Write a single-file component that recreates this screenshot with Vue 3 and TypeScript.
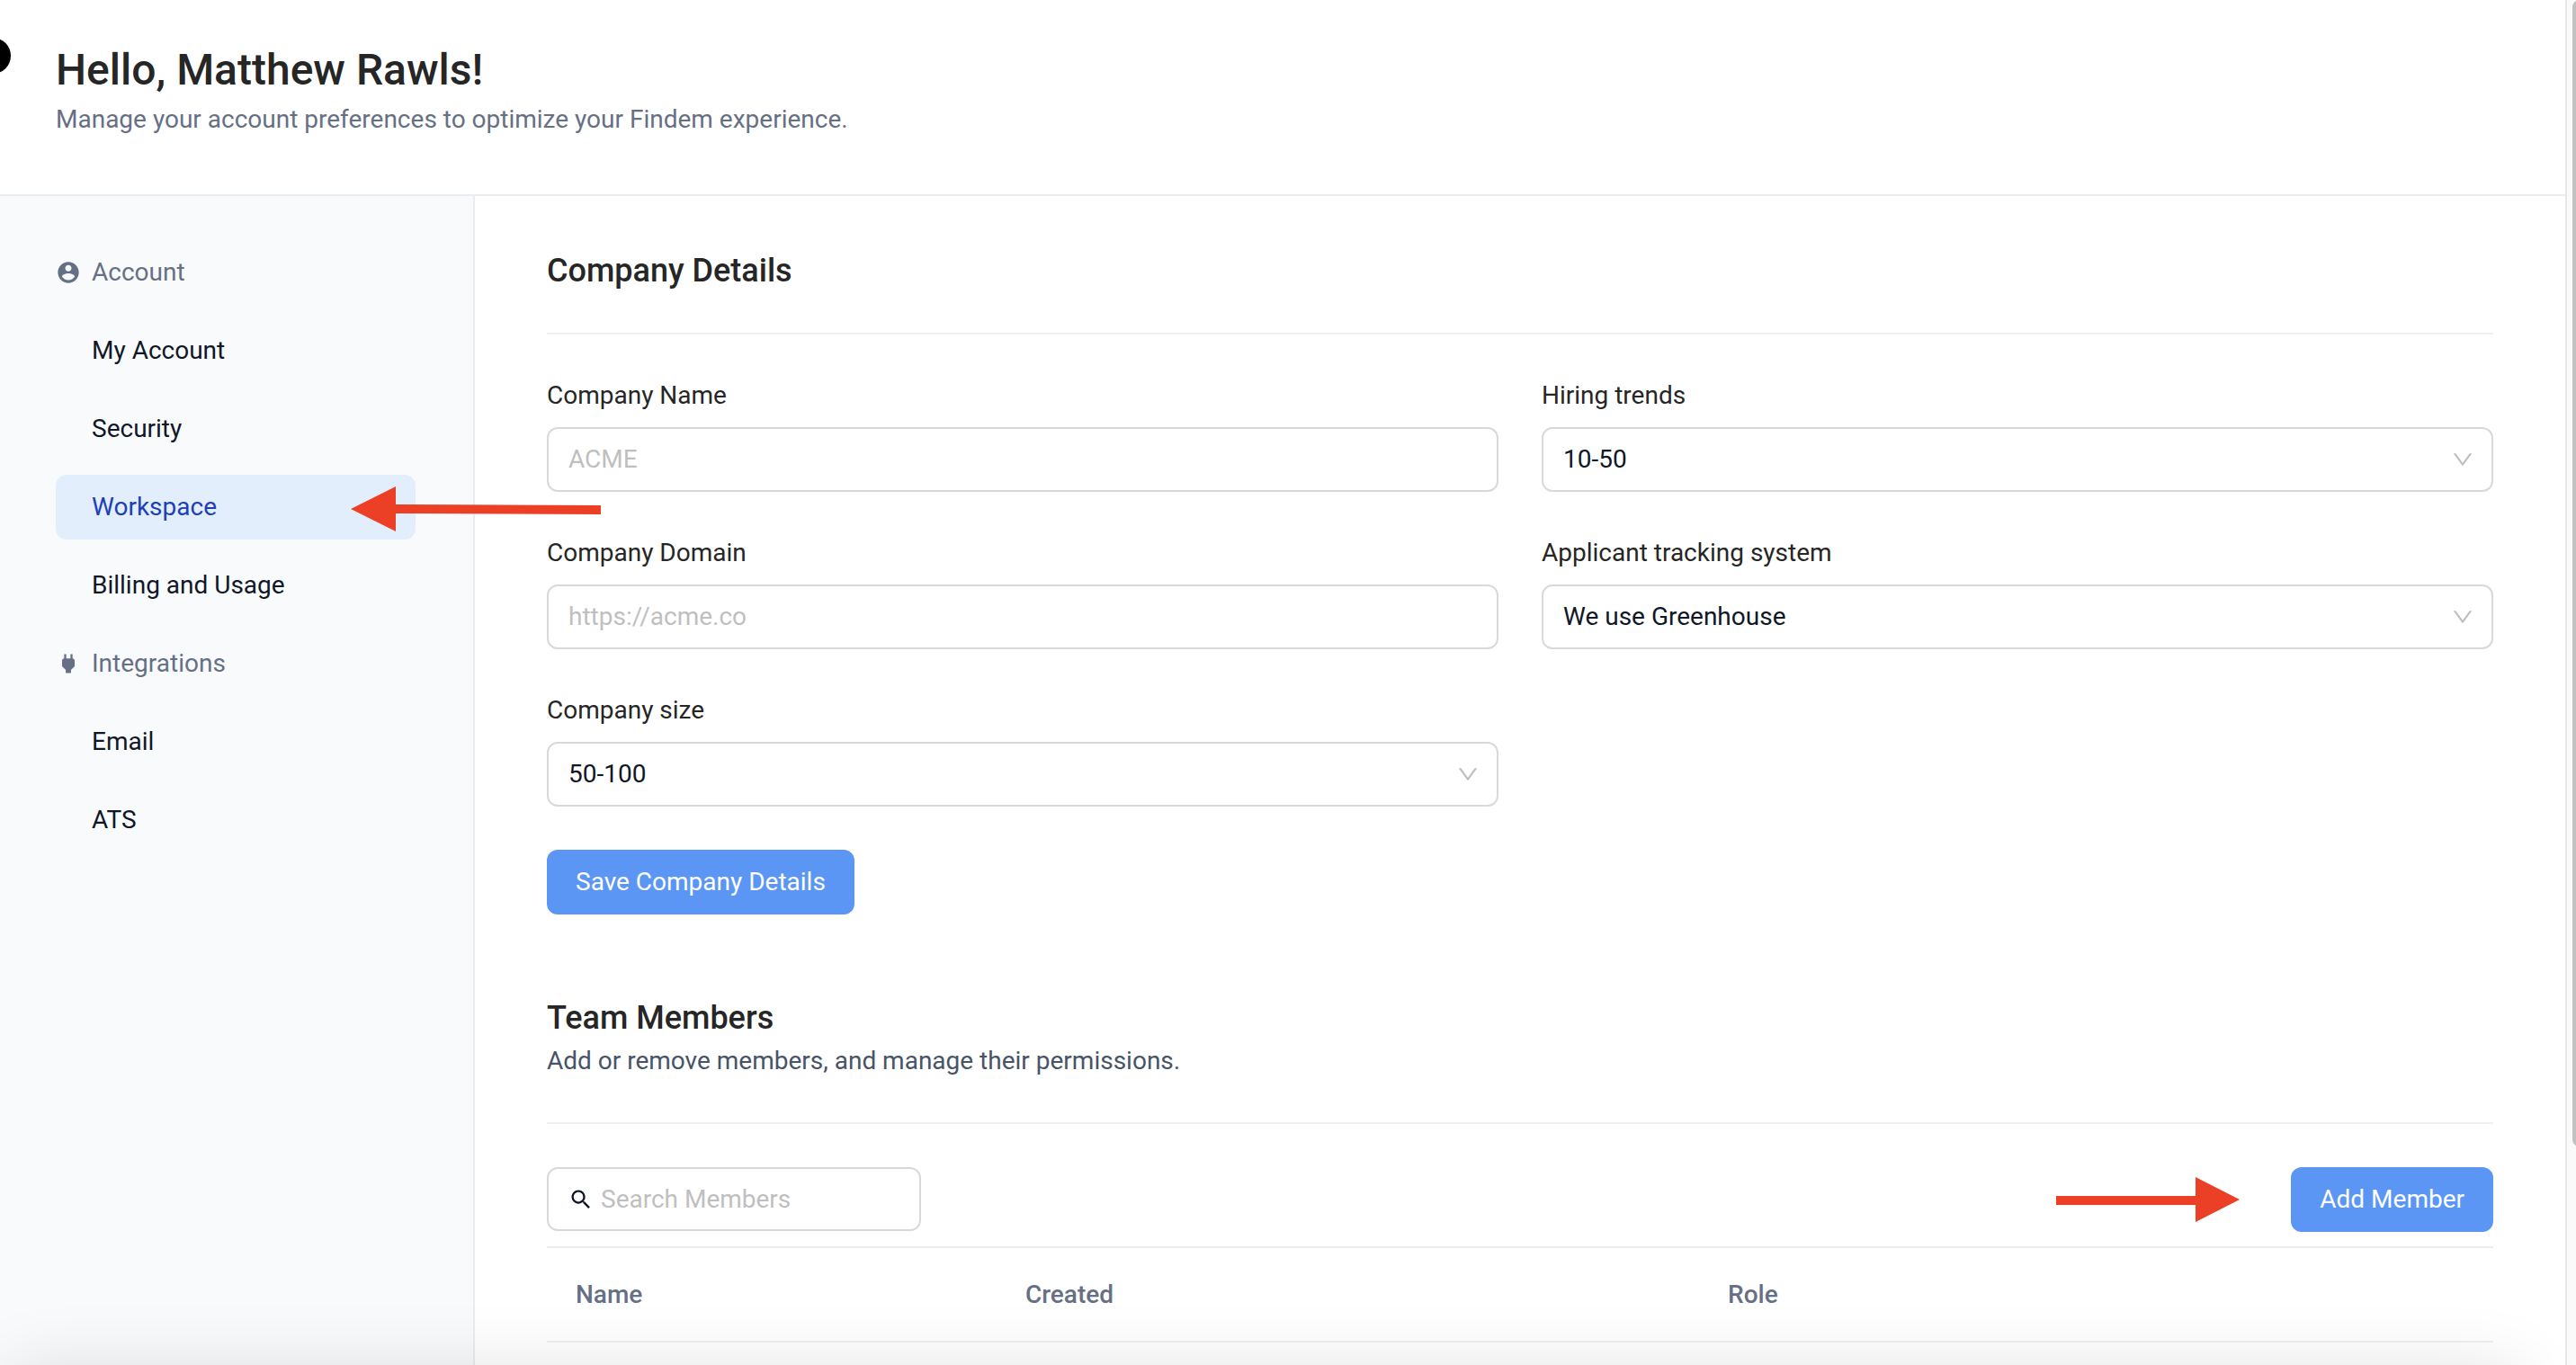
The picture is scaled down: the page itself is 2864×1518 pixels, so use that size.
<script setup lang="ts">
import { ref } from 'vue'

interface NavItem {
  label: string
  active?: boolean
}

interface NavGroup {
  title: string
  icon: string
  items: NavItem[]
}

const groups: NavGroup[] = [
  {
    title: 'Account',
    icon: 'M12 2C6.48 2 2 6.48 2 12s4.48 10 10 10 10-4.48 10-10S17.52 2 12 2zm0 3c1.66 0 3 1.34 3 3s-1.34 3-3 3-3-1.34-3-3 1.34-3 3-3zm0 14.2c-2.5 0-4.71-1.28-6-3.22.03-1.99 4-3.08 6-3.08 1.99 0 5.97 1.09 6 3.08-1.29 1.94-3.5 3.22-6 3.22z',
    items: [
      { label: 'My Account' },
      { label: 'Security' },
      { label: 'Workspace', active: true },
      { label: 'Billing and Usage' },
    ],
  },
  {
    title: 'Integrations',
    icon: 'M16.01 7L16 3h-2v4h-4V3H8v4h-.01C7 6.99 6 7.99 6 8.99v5.49L9.5 18v3h5v-3l3.5-3.51v-5.5c0-1-1-2-1.99-1.99z',
    items: [{ label: 'Email' }, { label: 'ATS' }],
  },
]

const chevron =
  'M884 256h-75c-5.1 0-9.9 2.5-12.9 6.6L512 654.2 227.9 262.6c-3-4.1-7.8-6.6-12.9-6.6h-75c-6.5 0-10.3 7.4-6.5 12.7l352.6 486.1c12.8 17.6 39 17.6 51.7 0l352.6-486.1c3.9-5.3.1-12.7-6.4-12.7z'

const companyName = ref('')
const companyDomain = ref('')
const companySize = ref('50-100')
const hiringTrend = ref('10-50')
const ats = ref('We use Greenhouse')
const search = ref('')

const sizes = ['1-10', '10-50', '50-100', '100-500']
const trends = ['1-10', '10-50', '50-100']
const systems = ['We use Greenhouse', 'We use Lever', 'We use Workday']
</script>

<template>
  <div class="shell">
    <div class="page">
      <header class="header">
        <span class="bubble" aria-hidden="true"></span>
        <h1>Hello, Matthew Rawls!</h1>
        <p>Manage your account preferences to optimize your Findem experience.</p>
      </header>

      <div class="body">
        <nav class="sidebar" aria-label="Settings">
          <template v-for="group in groups" :key="group.title">
            <div class="group">
              <svg class="icon" viewBox="0 0 24 24" aria-hidden="true">
                <path :d="group.icon" fill="currentColor" />
              </svg>
              <span>{{ group.title }}</span>
            </div>
            <a
              v-for="item in group.items"
              :key="item.label"
              href="#"
              class="link"
              :class="{ active: item.active }"
            >
              {{ item.label }}
              <svg v-if="item.active" class="arrow pointer" viewBox="0 0 278 50" aria-hidden="true">
                <path d="M0 25 50 0V20L278 21V31L50 30V50Z" fill="currentColor" />
              </svg>
            </a>
          </template>
        </nav>

        <main class="main">
          <section>
            <h2>Company Details</h2>
            <hr class="divider" />
            <form class="form" @submit.prevent>
              <div class="fields">
                <div class="field">
                  <label for="name">Company Name</label>
                  <input id="name" v-model="companyName" class="control text" type="text" placeholder="ACME" />
                </div>
                <div class="field">
                  <label for="trend">Hiring trends</label>
                  <div class="select">
                    <select id="trend" v-model="hiringTrend" class="control">
                      <option v-for="t in trends" :key="t">{{ t }}</option>
                    </select>
                    <svg viewBox="64 64 896 896" aria-hidden="true"><path :d="chevron" fill="currentColor" /></svg>
                  </div>
                </div>
                <div class="field">
                  <label for="domain">Company Domain</label>
                  <input id="domain" v-model="companyDomain" class="control text" type="text" placeholder="https://acme.co" />
                </div>
                <div class="field">
                  <label for="ats">Applicant tracking system</label>
                  <div class="select">
                    <select id="ats" v-model="ats" class="control">
                      <option v-for="s in systems" :key="s">{{ s }}</option>
                    </select>
                    <svg viewBox="64 64 896 896" aria-hidden="true"><path :d="chevron" fill="currentColor" /></svg>
                  </div>
                </div>
                <div class="field">
                  <label for="size">Company size</label>
                  <div class="select">
                    <select id="size" v-model="companySize" class="control">
                      <option v-for="s in sizes" :key="s">{{ s }}</option>
                    </select>
                    <svg viewBox="64 64 896 896" aria-hidden="true"><path :d="chevron" fill="currentColor" /></svg>
                  </div>
                </div>
              </div>
              <button class="button" type="submit">Save Company Details</button>
            </form>
          </section>

          <section class="team">
            <h2>Team Members</h2>
            <p class="hint">Add or remove members, and manage their permissions.</p>
            <hr class="divider" />
            <div class="toolbar">
              <label class="search">
                <svg class="icon" viewBox="0 0 24 24" aria-hidden="true">
                  <path
                    fill="currentColor"
                    d="M15.5 14h-.79l-.28-.27C15.41 12.59 16 11.11 16 9.5 16 5.91 13.09 3 9.5 3S3 5.91 3 9.5 5.91 16 9.5 16c1.61 0 3.09-.59 4.23-1.57l.27.28v.79l5 4.99L20.49 19l-4.99-5zm-6 0C7.01 14 5 11.99 5 9.5S7.01 5 9.5 5 14 7.01 14 9.5 11.99 14 9.5 14z"
                  />
                </svg>
                <input v-model="search" type="search" placeholder="Search Members" aria-label="Search Members" />
              </label>
              <div class="actions">
                <svg class="arrow" width="204" height="50" viewBox="0 0 204 50" aria-hidden="true">
                  <path d="M204 25 155 0V21H0V31H155V50Z" fill="currentColor" />
                </svg>
                <button class="button" type="button">Add Member</button>
              </div>
            </div>
            <table class="members">
              <thead>
                <tr>
                  <th scope="col" class="col-name">Name</th>
                  <th scope="col" class="col-created">Created</th>
                  <th scope="col">Role</th>
                </tr>
              </thead>
            </table>
          </section>
        </main>
      </div>
    </div>

    <div class="track" aria-hidden="true"><div class="thumb"></div></div>
    <div class="shade" aria-hidden="true"></div>
  </div>
</template>

<style>
body {
  margin: 0;
  background: #fff;
}
</style>

<style scoped>
.shell {
  display: flex;
  position: relative;
  min-height: 100vh;
  overflow: hidden;
  font-family: Roboto, 'Liberation Sans', sans-serif;
  font-size: 28px;
  line-height: 40px;
  color: #262626;
}

.shell *,
.shell *::before {
  box-sizing: border-box;
}

h1,
h2,
p {
  margin: 0;
}

.page {
  flex: 1;
  min-width: 0;
  display: flex;
  flex-direction: column;
}

.header {
  position: relative;
  padding: 50px 62px 63px;
  border-bottom: 2px solid #eaecf0;
}

.header h1 {
  margin-bottom: 7px;
  font-size: 48px;
  line-height: 56px;
  font-weight: 500;
}

.header p {
  color: #667085;
}

.bubble {
  position: absolute;
  top: 42px;
  left: -28px;
  width: 40px;
  height: 40px;
  border-radius: 50%;
  background: #000;
}

.body {
  flex: 1;
  display: flex;
}

.sidebar {
  flex: none;
  display: flex;
  flex-direction: column;
  gap: 15px;
  width: 528px;
  padding: 49px 64px 48px 62px;
  background: #f9fafc;
  border-right: 2px solid #eaecf0;
}

.group,
.link {
  display: flex;
  align-items: center;
  height: 72px;
}

.group {
  gap: 12px;
  color: #667085;
}

.icon {
  flex: none;
  width: 28px;
  height: 28px;
}

.link {
  position: relative;
  padding-left: 40px;
  border-radius: 12px;
  color: #101828;
  text-decoration: none;
}

.link.active {
  background: #e2eefc;
  color: #1d3fb8;
}

.arrow {
  flex: none;
  color: #eb4026;
}

.pointer {
  position: absolute;
  z-index: 1;
  top: 13px;
  right: -206px;
  width: 278px;
  height: 50px;
}

.main {
  flex: 1;
  min-width: 0;
  padding: 62px 80px 24px;
}

h2 {
  font-size: 36px;
  line-height: 42px;
  font-weight: 500;
}

.divider {
  height: 2px;
  margin: 48px 0;
  border: 0;
  background: #f0f0f0;
}

.form {
  display: flex;
  flex-direction: column;
  align-items: flex-start;
  gap: 48px;
}

.fields {
  display: grid;
  grid-template-columns: 1fr 1fr;
  gap: 48px;
  width: 100%;
}

.field {
  display: flex;
  flex-direction: column;
  gap: 15px;
}

.control {
  width: 100%;
  height: 72px;
  padding: 0 22px;
  border: 2px solid #d9d9d9;
  border-radius: 12px;
  background: #fff;
  color: #101828;
  font: inherit;
  appearance: none;
}

.control.text {
  padding-bottom: 2px;
}

::placeholder {
  color: #bfbfbf;
  opacity: 1;
}

.select {
  position: relative;
}

.select svg {
  position: absolute;
  top: 24px;
  right: 22px;
  width: 24px;
  height: 24px;
  color: #bfbfbf;
  pointer-events: none;
}

.button {
  height: 72px;
  padding: 0 32px;
  border: 0;
  border-radius: 12px;
  background: #5b96f4;
  color: #fff;
  font: inherit;
}

.team {
  margin-top: 94px;
}

.hint {
  margin-top: 7px;
  color: #475467;
}

.toolbar {
  display: flex;
  align-items: flex-start;
  justify-content: space-between;
}

.search {
  display: flex;
  align-items: center;
  gap: 8px;
  width: 416px;
  height: 71px;
  padding: 0 22px;
  border: 2px solid #d9d9d9;
  border-radius: 12px;
  color: #101828;
}

.search input {
  flex: 1;
  min-width: 0;
  padding: 0;
  border: 0;
  outline: 0;
  background: none;
  color: inherit;
  font: inherit;
  appearance: none;
}

.actions {
  display: flex;
  align-items: center;
  gap: 57px;
}

.members {
  width: 100%;
  margin-top: 16px;
  border-collapse: separate;
  border-spacing: 0;
  table-layout: fixed;
  border-top: 2px solid #eaecf0;
}

.members th {
  height: 105px;
  padding: 0 32px;
  border-bottom: 2px solid #f0f0f0;
  color: #667085;
  font-weight: 500;
  text-align: left;
}

.col-name {
  width: 23.1%;
}

.col-created {
  width: 36.1%;
}

.track {
  flex: none;
  width: 12px;
  overflow: hidden;
  border-left: 2px solid #e8e8e8;
  background: #fafafa;
}

.thumb {
  width: 16px;
  height: 84%;
  margin-left: 6px;
  border-radius: 8px;
  background: #c1c1c1;
}

.shade {
  position: absolute;
  top: 100%;
  left: 10px;
  right: 64px;
  height: 200px;
  box-shadow: 0 8px 80px rgba(0, 0, 0, 0.13);
  pointer-events: none;
}
</style>
